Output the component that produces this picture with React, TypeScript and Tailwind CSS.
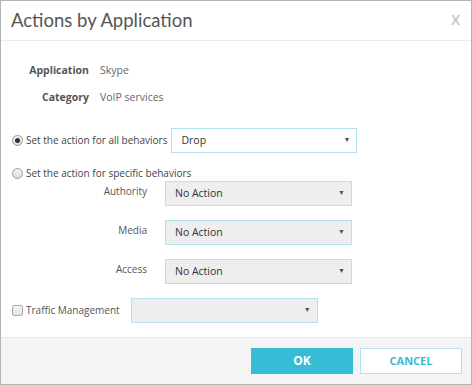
import React from "react";

const Select = ({ value, disabled, width }: { value: string; disabled?: boolean; width: string }) => (
  <div
    className={`flex h-[25px] items-center justify-between border border-[#b3e3ec] pl-[9px] pr-[6px] text-[10.5px] text-[#333] ${width} ${
      disabled ? "bg-[#eeeeee]" : "bg-white"
    }`}
  >
    <span>{value}</span>
    <span className="text-[7px] text-[#555]">▼</span>
  </div>
);

const Radio = ({ checked }: { checked?: boolean }) => (
  <span className="flex h-[11px] w-[11px] items-center justify-center rounded-full border border-[#9a9a9a] bg-gradient-to-b from-[#f4f4f4] to-[#dcdcdc]">
    {checked && <span className="h-[5px] w-[5px] rounded-full bg-[#333]" />}
  </span>
);

export default function App() {
  return (
    <div className="h-[385px] w-[472px] overflow-hidden bg-white font-['Open_Sans',sans-serif]">
      <div className="flex h-full flex-col border border-[#b4b4b4]">
        {/* header */}
        <div className="flex h-[40px] items-center justify-between border-b border-[#ececec] pl-[10px] pr-[11px]">
          <span className="font-['Lato',sans-serif] text-[18.5px] text-[#555]">Actions by Application</span>
          <span className="font-['Lato',sans-serif] text-[13px] font-bold text-[#c4c4c4]">X</span>
        </div>

        {/* body */}
        <div className="flex flex-1 flex-col text-[10px] text-[#555]">
          <div className="mt-[21px] grid grid-cols-[88px_1fr] gap-x-[11px] gap-y-[11px] leading-[16px]">
            <span className="text-right text-[10.5px] font-bold">Application</span>
            <span className="text-[10.5px] text-[#666]">Skype</span>
            <span className="text-right text-[10.5px] font-bold">Category</span>
            <span className="text-[10.5px] text-[#666]">VoIP services</span>
          </div>

          <div className="mt-[23px] flex items-center pl-[11px]">
            <Radio checked />
            <span className="ml-[3px] mr-[4px] text-[#444]">Set the action for all behaviors</span>
            <Select value="Drop" width="w-[186px]" />
          </div>

          <div className="mt-[13px] flex items-center pl-[11px]">
            <Radio />
            <span className="ml-[3px] text-[#444]">Set the action for specific behaviors</span>
          </div>

          <div className="flex flex-col gap-[14px]">
            {["Authority", "Media", "Access"].map((label) => (
              <div key={label} className="flex items-start">
                <span className="w-[146px] pt-[3px] text-right text-[#555]">{label}</span>
                <div className="ml-[18px]">
                  <Select value="No Action" disabled width="w-[187px]" />
                </div>
              </div>
            ))}
          </div>

          <div className="mt-[14px] flex items-center pl-[11px]">
            <span className="h-[11px] w-[11px] rounded-[2px] border border-[#aaa] bg-gradient-to-b from-[#f6f6f6] to-[#e2e2e2]" />
            <span className="ml-[3px] mr-[11px] text-[#555]">Traffic Management</span>
            <Select value="" disabled width="w-[187px]" />
          </div>
        </div>

        {/* footer */}
        <div className="flex h-[47px] items-center justify-end gap-[7px] border-t border-[#e8e8e8] bg-[#f4f4f4] pr-[9px]">
          <button className="h-[26px] w-[102px] bg-[#37bcd6] text-[12px] font-bold text-white">OK</button>
          <button className="h-[26px] w-[102px] border border-[#b3e3ec] bg-white text-[11px] font-bold text-[#37bcd6]">
            CANCEL
          </button>
        </div>
      </div>
    </div>
  );
}
